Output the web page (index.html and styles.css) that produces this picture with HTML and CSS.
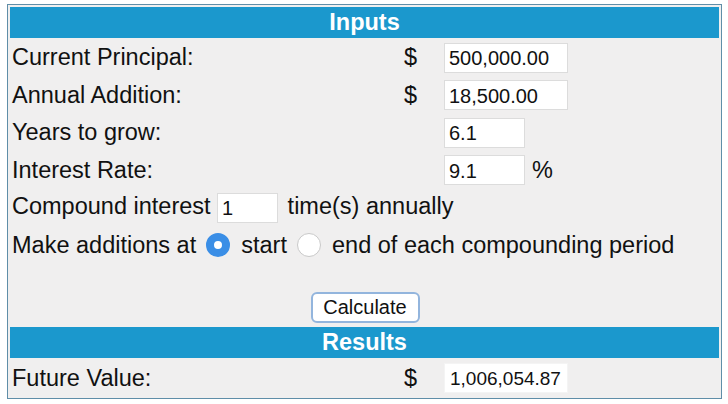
FILE: index.html
```html
<!DOCTYPE html>
<html>
<head>
<meta charset="utf-8">
<link rel="stylesheet" href="styles.css">
</head>
<body>
<div class="wrap">
<table class="calc">
  <tr><th colspan="3" class="band">Inputs</th></tr>
  <tr>
    <td class="label">Current Principal:</td>
    <td class="cur">$</td>
    <td class="val"><input class="num wide" type="text" value="500,000.00"></td>
  </tr>
  <tr>
    <td class="label">Annual Addition:</td>
    <td class="cur">$</td>
    <td class="val"><input class="num wide" type="text" value="18,500.00"></td>
  </tr>
  <tr>
    <td class="label">Years to grow:</td>
    <td class="cur"></td>
    <td class="val"><input class="num short" type="text" value="6.1"></td>
  </tr>
  <tr>
    <td class="label">Interest Rate:</td>
    <td class="cur"></td>
    <td class="val"><input class="num short" type="text" value="9.1"><span class="suffix">%</span></td>
  </tr>
  <tr>
    <td colspan="3" class="label">Compound interest <input class="num tiny" type="text" value="1"> time(s) annually</td>
  </tr>
  <tr>
    <td colspan="3" class="label">Make additions at <span class="radio on"></span> start <span class="radio"></span> end of each compounding period</td>
  </tr>
  <tr class="gap"><td colspan="3"></td></tr>
  <tr>
    <td colspan="3" class="center"><button class="btn">Calculate</button></td>
  </tr>
  <tr><th colspan="3" class="band">Results</th></tr>
  <tr class="last">
    <td class="label">Future Value:</td>
    <td class="cur">$</td>
    <td class="val"><input class="num wide out" type="text" value="1,006,054.87" readonly></td>
  </tr>
</table>
</div>
</body>
</html>
```
FILE: styles.css
```css
html, body {
  margin: 0;
  padding: 0;
  background: #ffffff;
}
.wrap {
  padding: 4px 0 0 7px;
}
.calc {
  width: 715px;
  border: 1px solid #5f8ea8;
  border-spacing: 2px;
  background: #f0efef;
  font-family: "Liberation Sans", Arial, Helvetica, sans-serif;
  font-size: 23.5px;
  color: #111;
}
.calc td {
  padding: 0 0 0 2px;
  height: 35.5px;
  line-height: 27px;
  vertical-align: middle;
  white-space: nowrap;
}
.band {
  background: #1b98cd;
  color: #ffffff;
  font-weight: bold;
  font-size: 23.5px;
  line-height: 27px;
  height: 31px;
  padding: 0;
  text-align: center;
}
.calc td.label {
  width: 386px;
}
.calc td.cur {
  width: 38px;
  padding: 0 0 0 4px;
}
.calc td.val {
  padding: 0;
}
.num {
  font-family: "Liberation Sans", Arial, Helvetica, sans-serif;
  font-size: 20px;
  color: #111;
  height: 30px;
  box-sizing: border-box;
  border: 1px solid #dcdcdc;
  background: #ffffff;
  padding: 2px 4px 0 4px;
  margin: 0;
  vertical-align: middle;
  outline: none;
}
.wide { width: 124px; }
.short { width: 81px; }
.tiny { width: 61px; margin: 0 3px 0 0; }
.out {
  border-color: #f4f4f4;
  font-size: 19px;
  padding: 2px 2px 0 5px;
}
.suffix {
  display: inline-block;
  margin-left: 7px;
  vertical-align: middle;
}
.radio {
  display: inline-block;
  box-sizing: border-box;
  width: 24px;
  height: 24px;
  border-radius: 50%;
  border: 1px solid #c9c9c9;
  background: #ffffff;
  vertical-align: -4px;
  margin: 0 5px 0 3px;
}
.radio.on {
  border: 8px solid #3a8ee6;
  background: #ffffff;
}
.gap td {
  height: 22px;
}
.calc td.center {
  text-align: center;
  padding: 0;
  height: 36px;
}
.last td {
  height: 36px;
}
.btn {
  font-family: "Liberation Sans", Arial, Helvetica, sans-serif;
  font-size: 20px;
  color: #111;
  background: #ffffff;
  border: 2px solid #93b5dd;
  border-radius: 6px;
  height: 31px;
  width: 109px;
  padding: 0;
  margin-left: 1px;
}
```
